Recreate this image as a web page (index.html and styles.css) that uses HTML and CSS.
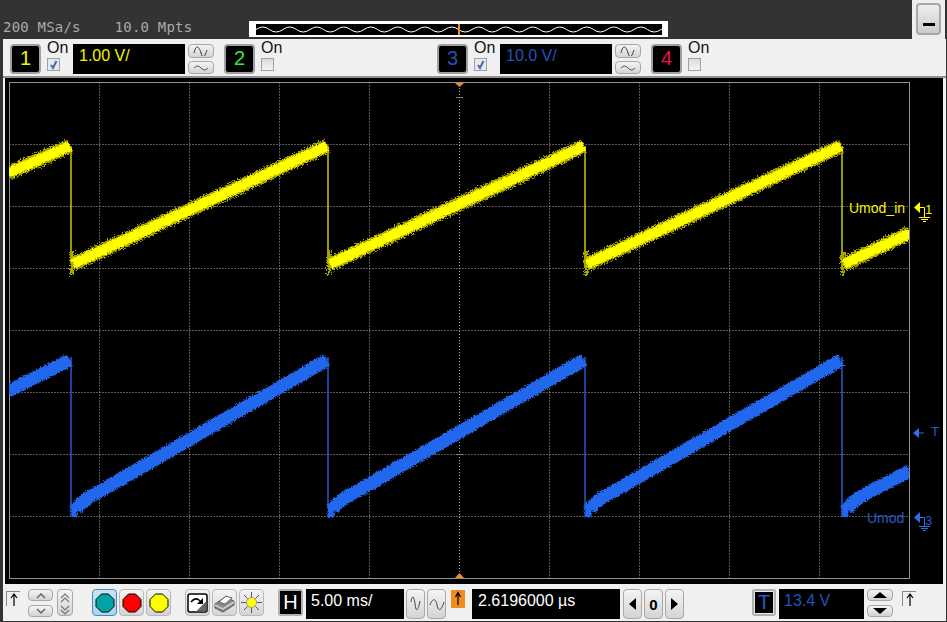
FILE: index.html
```html
<!DOCTYPE html>
<html lang="en">
<head>
    <meta charset="UTF-8">
    <title>Oscilloscope</title>
    <link rel="stylesheet" href="styles.css">
</head>
<body>

<div class="scope">
    <!-- top status strip -->
    <div class="status">
        <span class="rate">200 MSa/s</span>
        <span class="points">10.0 Mpts</span>
        <div class="overview">
            <svg width="406" height="11">
                <defs>
                    <pattern id="ripple" width="27" height="11" patternUnits="userSpaceOnUse">
                        <path d="M0 5.5q6.75-5 13.5 0t13.5 0" fill="none" stroke="#fff"/>
                    </pattern>
                </defs>
                <rect width="406" height="11" fill="url(#ripple)"/>
                <rect x="202" width="2" height="11" fill="#f08c1e"/>
            </svg>
        </div>
        <div class="minimize-wrap"><button class="minimize"><span></span></button></div>
    </div>

    <!-- channel controls -->
    <div class="channels">
        <div class="chan chan-1">
            <div class="chan-num yellow">1</div>
            <div class="chan-on">On<span class="check on"><svg width="11" height="11"><path d="M3 6l2 3L8.500 2" fill="none" stroke="#4a6aa5" stroke-width="2"/></svg></span></div>
            <div class="chan-value yellow">1.00 V/</div>
            <div class="coupling">
                <button><svg width="20" height="10"><path d="M3 7c2-9 5-7 7 0s4 3 6-3" fill="none" stroke="#333"/></svg></button>
                <button><svg width="20" height="10"><path d="M3 6q3.500-4 7 0t7 0" fill="none" stroke="#555"/></svg></button>
            </div>
        </div>
        <div class="chan chan-2">
            <div class="chan-num green">2</div>
            <div class="chan-on">On<span class="check"></span></div>
        </div>
        <div class="chan chan-3">
            <div class="chan-num blue">3</div>
            <div class="chan-on">On<span class="check on"><svg width="11" height="11"><path d="M3 6l2 3L8.500 2" fill="none" stroke="#4a6aa5" stroke-width="2"/></svg></span></div>
            <div class="chan-value blue">10.0 V/</div>
            <div class="coupling">
                <button><svg width="20" height="10"><path d="M3 7c2-9 5-7 7 0s4 3 6-3" fill="none" stroke="#333"/></svg></button>
                <button><svg width="20" height="10"><path d="M3 6q3.500-4 7 0t7 0" fill="none" stroke="#555"/></svg></button>
            </div>
        </div>
        <div class="chan chan-4">
            <div class="chan-num red">4</div>
            <div class="chan-on">On<span class="check"></span></div>
        </div>
    </div>

    <!-- waveform area, viewBox is in window pixels -->
    <div class="screen">
        <svg class="plot" width="938" height="506" viewBox="5 79 938 506">
            <defs>
                <filter id="fuzz" x="-5%" y="-20%" width="110%" height="140%">
                    <feTurbulence type="fractalNoise" baseFrequency="0.7" numOctaves="2" seed="4"/>
                    <feDisplacementMap in="SourceGraphic" scale="8" xChannelSelector="R" yChannelSelector="G"/>
                </filter>
                <filter id="fuzz-soft" x="-5%" y="-20%" width="110%" height="140%">
                    <feTurbulence type="fractalNoise" baseFrequency="0.8" numOctaves="2" seed="9"/>
                    <feDisplacementMap in="SourceGraphic" scale="5" xChannelSelector="R" yChannelSelector="G"/>
                </filter>
                <clipPath id="grid-clip"><rect x="9" y="83" width="900" height="496"/></clipPath>
            </defs>

            <path class="grid" d="M99 83V579M189 83V579M279 83V579M369 83V579M549 83V579M639 83V579M729 83V579M819 83V579"/>
            <path class="grid" d="M9 145H909M9 207H909M9 269H909M9 331H909M9 393H909M9 455H909M9 517H909"/>
            <path class="grid-mid" d="M459.500 83V579"/>
            <path class="tick" d="M456 98.500H463M456 431.500H463M456 455.500H463"/>
            <rect class="border" x="9.500" y="83.500" width="900" height="496"/>

            <g clip-path="url(#grid-clip)">
                <path class="edge-y" d="M71 147V265M328 147V265M585 147V265M842 147V265"/>
                <g filter="url(#fuzz)">
                    <path class="band-y-dark" d="M8 174L70 147M73 265L327 147M330 265L584 147M587 265L841 147M844 265L910 234"/>
                    <path class="spike-y" d="M72 252V276M329 252V276M586 252V276M843 252V276"/>
                </g>
                <g filter="url(#fuzz-soft)">
                    <path class="band-y" d="M8 174L70 147M73 265L327 147M330 265L584 147M587 265L841 147M844 265L910 234"/>
                </g>

                <path class="edge-b" d="M71 358V510M328 358V510M585 358V510M842 358V510"/>
                <g filter="url(#fuzz-soft)">
                    <path class="band-b" d="M8 392L70 361M76 510C84 500 92 496 104 490L327 361M333 510C341 500 349 496 361 490L584 361M590 510C598 500 606 496 618 490L841 361M847 510C855 500 863 496 875 490L910 472"/>
                    <path class="blob-b" d="M74 505V518M331 505V518M588 505V518M845 505V518"/>
                </g>
            </g>

            <path class="marker" d="M455 84H464L459.500 88Z"/>
            <path class="marker" d="M455 579H464L459.500 574Z"/>

            <text class="label yellow-fill" x="849" y="214">Umod_in</text>
            <path class="arrow-y" d="M920 203V214L914 208.500Z"/>
            <path class="stroke-y" d="M919 208.500H924.500M924.500 208.500V218M919 218.500H930M921 220.500H928M923 222.500H926"/>
            <text class="ref yellow-fill" x="925" y="215">1</text>

            <text class="ref blue-fill" x="931" y="437">T</text>
            <path class="arrow-b" d="M919 429V439L913 434Z"/>
            <path class="stroke-b" d="M918 434H924"/>

            <text class="label blue-fill" x="867" y="524">Umod</text>
            <path class="arrow-b" d="M920 513V524L914 518.500Z"/>
            <path class="stroke-b" d="M919 518.500H924.500M924.500 518.500V527M919 527.500H930M921 529.500H928M923 531.500H926"/>
            <text class="ref blue-fill" x="925" y="526">3</text>
        </svg>
    </div>

    <!-- bottom controls -->
    <div class="controls">
        <div class="ref-arrow first"><svg width="14" height="15"><path d="M7 14V3M4 6l3-4 3 4" fill="none" stroke="#000" stroke-width="1.200"/></svg></div>
        <div class="updown chevrons">
            <button><svg width="12" height="7"><path d="M2 6l4-4 4 4" fill="none" stroke="#666" stroke-width="1.500"/></svg></button>
            <button><svg width="12" height="7"><path d="M2 1l4 4 4-4" fill="none" stroke="#666" stroke-width="1.500"/></svg></button>
        </div>
        <button class="tall"><svg width="12" height="24"><path d="M2 7l4-4 4 4M2 11l4-4 4 4M2 15l4 4 4-4M2 19l4 4 4-4" fill="none" stroke="#777" stroke-width="1.200"/></svg></button>

        <div class="tool-group run">
            <button class="tool active"><svg width="20" height="20"><path class="octagon" fill="#00a6a6" d="M6.500 1h7L19 6.500v7L13.500 19h-7L1 13.500v-7Z"/></svg></button>
            <button class="tool"><svg width="20" height="20"><path class="octagon" fill="#f00" d="M6.500 1h7L19 6.500v7L13.500 19h-7L1 13.500v-7Z"/></svg></button>
            <button class="tool"><svg width="20" height="20"><path class="octagon" fill="#ff0" d="M6.500 1h7L19 6.500v7L13.500 19h-7L1 13.500v-7Z"/></svg></button>
        </div>

        <div class="tool-group utils">
            <button class="tool"><svg width="21" height="20"><rect x="1" y="1" width="19" height="18" rx="2" fill="#fff" stroke="#000" stroke-width="1.500"/><path d="M19.500 8v10.500H9Z" fill="#666"/><path d="M4 9q4-5 8-2l2 2" fill="none" stroke="#000" stroke-width="1.500"/><path d="M16 5v6h-6Z" fill="#000"/></svg></button>
            <button class="tool"><svg width="23" height="21"><path d="M2 12L12 5l9 4v4L10 20 2 16Z" fill="#8a8a8a" stroke="#555"/><path d="M6 10l7-6 6 2-7 6Z" fill="#fff" stroke="#666"/><path d="M2 13l8 4 11-7" fill="none" stroke="#d0d0d0" stroke-width="1.500"/></svg></button>
            <button class="tool"><svg width="23" height="23"><circle cx="11.500" cy="11.500" r="5" fill="#ff0" stroke="#999"/><path d="M11.500 1v5M11.500 17v5M1 11.500h5M17 11.500h5M4 4l3.500 3.500M15.500 15.500l3.500 3.500M19 4l-3.500 3.500M7.500 15.500L4 19" stroke="#555"/></svg></button>
        </div>

        <div class="letter-box h-box"><span>H</span></div>
        <div class="readout time">5.00 ms/</div>
        <button class="wave-btn"><svg width="14" height="22"><path d="M2 9c1-7 3-7 4 2s3 7 5-3" fill="none" stroke="#444"/></svg></button>
        <button class="wave-btn"><svg width="16" height="22"><path d="M1 12c3-8 6-6 7 0s4 7 7-3" fill="none" stroke="#444"/></svg></button>
        <div class="delay-ref"><svg width="14" height="17"><path d="M7 15V4M4.500 7L7 2.500 9.500 7" fill="none" stroke="#000" stroke-width="1.200"/></svg></div>
        <div class="readout delay">2.6196000 µs</div>
        <button class="nav-btn first-nav"><span class="tri-left"></span></button>
        <button class="nav-btn zero">0</button>
        <button class="nav-btn"><span class="tri-right"></span></button>

        <div class="letter-box t-box"><span>T</span></div>
        <div class="readout level">13.4 V</div>
        <div class="updown level-btns">
            <button><span class="tri-up"></span></button>
            <button><span class="tri-down"></span></button>
        </div>
        <div class="ref-arrow last"><svg width="14" height="15"><path d="M7 14V3M4 6l3-4 3 4" fill="none" stroke="#000" stroke-width="1.200"/></svg></div>
    </div>
</div>

</body>
</html>
```

FILE: styles.css
```css
html, body {
    margin: 0;
    padding: 0;
    background-color: #333;
    overflow: hidden;
}

body {
    font-family: "Liberation Sans", Arial, sans-serif;
}

.scope {
    width: 947px;
    height: 622px;
    display: flex;
    flex-direction: column;
}

button {
    padding: 0;
    display: flex;
    align-items: center;
    justify-content: center;
    border: 2px solid #a8a8a8;
    border-radius: 4px;
    background: linear-gradient(#f4f4f4, #d4d4d4);
}

.yellow { color: #f4f400; }
.green { color: #38e838; }
.blue { color: #2452b8; }
.red { color: #f0104a; }

/* status strip */
.status {
    height: 39px;
    display: flex;
    align-items: flex-end;
    flex-shrink: 0;
    box-sizing: border-box;
    position: relative;
}

.rate, .points {
    font-family: "DejaVu Sans Mono", monospace;
    font-size: 14px;
    letter-spacing: 0.2px;
    color: #aaa;
    line-height: 17px;
    margin-bottom: 3px;
}

.rate { margin-left: 3px; }
.points { margin-left: 34px; }

.overview {
    width: 419px;
    height: 16px;
    margin-left: 57px;
    margin-bottom: 2px;
    background-color: #fff;
    padding: 3px 6px 2px 7px;
    box-sizing: border-box;
}

.overview svg {
    display: block;
    background-color: #000;
}

.minimize-wrap {
    margin-left: 244px;
    width: 33px;
    height: 39px;
    background-color: #eee;
    padding: 3px 0 0 4px;
    box-sizing: border-box;
}

.minimize {
    width: 25px;
    height: 32px;
    align-items: flex-end;
    padding-bottom: 7px;
    background: linear-gradient(#eee, #ccc);
}

.minimize span {
    display: block;
    width: 12px;
    height: 3px;
    background-color: #000;
}

/* channel controls */
.channels {
    height: 39px;
    margin: 0 1px 0 3px;
    box-sizing: border-box;
    background-color: #f0f0f0;
    border-bottom: 2px solid #909090;
    display: flex;
    flex-shrink: 0;
    padding-top: 5px;
}

.chan {
    display: flex;
    height: 30px;
}

.chan-1 { margin-left: 7px; }
.chan-2 { margin-left: 10px; }
.chan-3 { margin-left: 150px; }
.chan-4 { margin-left: 10px; }

.chan-num {
    width: 31px;
    height: 30px;
    box-sizing: border-box;
    background-color: #000;
    border: 2px solid #a0a0a0;
    border-radius: 4px;
    font-size: 20px;
    line-height: 24px;
    text-align: center;
}

.chan-on {
    width: 26px;
    margin-left: 6px;
    margin-top: -3px;
    font-size: 16px;
    line-height: 14px;
    color: #111;
    display: flex;
    flex-direction: column;
    align-items: flex-start;
}

.check {
    display: block;
    width: 13px;
    height: 13px;
    margin-top: 3px;
    box-sizing: border-box;
    border: 1px solid #a0a0a0;
    background: linear-gradient(#dcdcdc, #f4f4f4);
}

.check.on {
    background: #e4e8f0;
}

.check svg {
    display: block;
}

.chan-value {
    width: 112px;
    height: 30px;
    background-color: #000;
    font-size: 16px;
    line-height: 24px;
    padding-left: 6px;
    box-sizing: border-box;
}

.coupling {
    margin-left: 3px;
    display: flex;
    flex-direction: column;
    gap: 3px;
}

.coupling button {
    width: 26px;
    height: 14px;
    border-width: 1px;
    border-radius: 4px;
}

/* waveform area */
.screen {
    height: 506px;
    margin: 0 1px 0 3px;
    flex-shrink: 0;
    background-color: #f0f0f0;
    padding: 0 3px 0 2px;
}

.plot {
    display: block;
    background-color: #000;
}

.grid, .grid-mid {
    fill: none;
    stroke: #b0b0b0;
    stroke-width: 1;
    stroke-dasharray: 1 2;
}

.grid {
    transform: translate(0.5px, 0.5px);
}

.tick {
    fill: none;
    stroke: #808080;
}

.border {
    fill: none;
    stroke: #909090;
}

.edge-y {
    fill: none;
    stroke: #c8c800;
    stroke-width: 1.5;
}

.band-y-dark {
    fill: none;
    stroke: #a8a400;
    stroke-width: 14;
}

.spike-y {
    fill: none;
    stroke: #a8a400;
    stroke-width: 4;
}

.band-y {
    fill: none;
    stroke: #ffff00;
    stroke-width: 10;
}

.edge-b {
    fill: none;
    stroke: #2a5ac8;
    stroke-width: 1.5;
}

.band-b {
    fill: none;
    stroke: #2468ee;
    stroke-width: 13;
}

.blob-b {
    fill: none;
    stroke: #2468ee;
    stroke-width: 7;
}

.marker {
    fill: #f08c1e;
}

.label {
    font-size: 14px;
}

.ref {
    font-size: 13px;
}

.yellow-fill { fill: #f4f400; }
.blue-fill { fill: #2858c8; }

.arrow-y { fill: #ffff00; }
.arrow-b { fill: #2e6ee8; }

.stroke-y {
    fill: none;
    stroke: #ffff00;
}

.stroke-b {
    fill: none;
    stroke: #2e6ee8;
}

/* bottom controls */
.controls {
    height: 37px;
    margin: 0 1px 0 3px;
    background-color: #f0f0f0;
    display: flex;
    flex-shrink: 0;
    align-items: flex-start;
    padding-top: 5px;
    box-sizing: border-box;
}

.ref-arrow {
    width: 14px;
    height: 15px;
    margin-top: 2px;
    border-left: 1px solid #888;
    border-top: 1px solid #888;
    box-sizing: border-box;
}

.ref-arrow svg {
    display: block;
}

.first { margin-left: 3px; }

.updown {
    display: flex;
    flex-direction: column;
    gap: 4px;
}

.updown button {
    width: 25px;
    height: 12px;
    border-width: 1px;
}

.chevrons { margin-left: 8px; }

.tall {
    width: 16px;
    height: 27px;
    margin-left: 4px;
    border-width: 1px;
}

.tool-group {
    display: flex;
    gap: 2px;
}

.run { margin-left: 19px; }
.utils { margin-left: 14px; }

.tool {
    width: 25px;
    height: 27px;
    border-width: 1px;
    border-color: #b8b8b8;
}

.tool.active {
    border-color: #4a88b8;
    background: linear-gradient(#c8e4f6, #a8d4f0);
}

.octagon {
    stroke: #000;
    stroke-width: 1;
}

.letter-box {
    box-sizing: border-box;
    border: 2px solid #b0b0b0;
    border-radius: 3px;
    background-color: #e8e8e8;
    display: flex;
    align-items: center;
    justify-content: center;
}

.letter-box span {
    display: block;
    background-color: #000;
    text-align: center;
}

.h-box {
    width: 25px;
    height: 27px;
    margin-left: 14px;
}

.h-box span {
    width: 21px;
    height: 23px;
    color: #fff;
    font-size: 20px;
    line-height: 23px;
}

.t-box {
    width: 24px;
    height: 27px;
    margin-left: 68px;
}

.t-box span {
    width: 18px;
    height: 21px;
    color: #2858c8;
    font-size: 20px;
    line-height: 21px;
}

.readout {
    height: 30px;
    background-color: #000;
    font-size: 16px;
    line-height: 24px;
    box-sizing: border-box;
    margin-left: 3px;
}

.time {
    width: 98px;
    color: #fff;
    padding-left: 5px;
}

.delay {
    width: 148px;
    color: #fff;
    padding-left: 6px;
    margin-left: 7px;
}

.level {
    width: 85px;
    color: #2452b8;
    padding-left: 5px;
}

.wave-btn {
    width: 19px;
    height: 30px;
    margin-left: 2px;
    border-width: 1px;
}

.wave-btn:first-of-type {
    margin-left: 3px;
}

.delay-ref {
    width: 14px;
    height: 18px;
    margin-left: 5px;
    margin-top: 1px;
    background-color: #f08c1e;
}

.delay-ref svg {
    display: block;
}

.nav-btn {
    width: 19px;
    height: 30px;
    margin-left: 2px;
    border-width: 1px;
    font-family: "Liberation Sans", Arial, sans-serif;
    font-size: 15px;
    font-weight: bold;
    color: #000;
}

.first-nav { margin-left: 3px; }

.tri-left, .tri-right, .tri-up, .tri-down {
    display: block;
    width: 0;
    height: 0;
    border-style: solid;
    border-color: transparent;
}

.tri-left {
    border-width: 6px 7px 6px 0;
    border-right-color: #000;
}

.tri-right {
    border-width: 6px 0 6px 7px;
    border-left-color: #000;
}

.tri-up {
    border-width: 0 7px 6px;
    border-bottom-color: #000;
}

.tri-down {
    border-width: 6px 7px 0;
    border-top-color: #000;
}

.level-btns {
    margin-left: 3px;
}

.level-btns button {
    width: 26px;
}

.last { margin-left: 9px; }
```
